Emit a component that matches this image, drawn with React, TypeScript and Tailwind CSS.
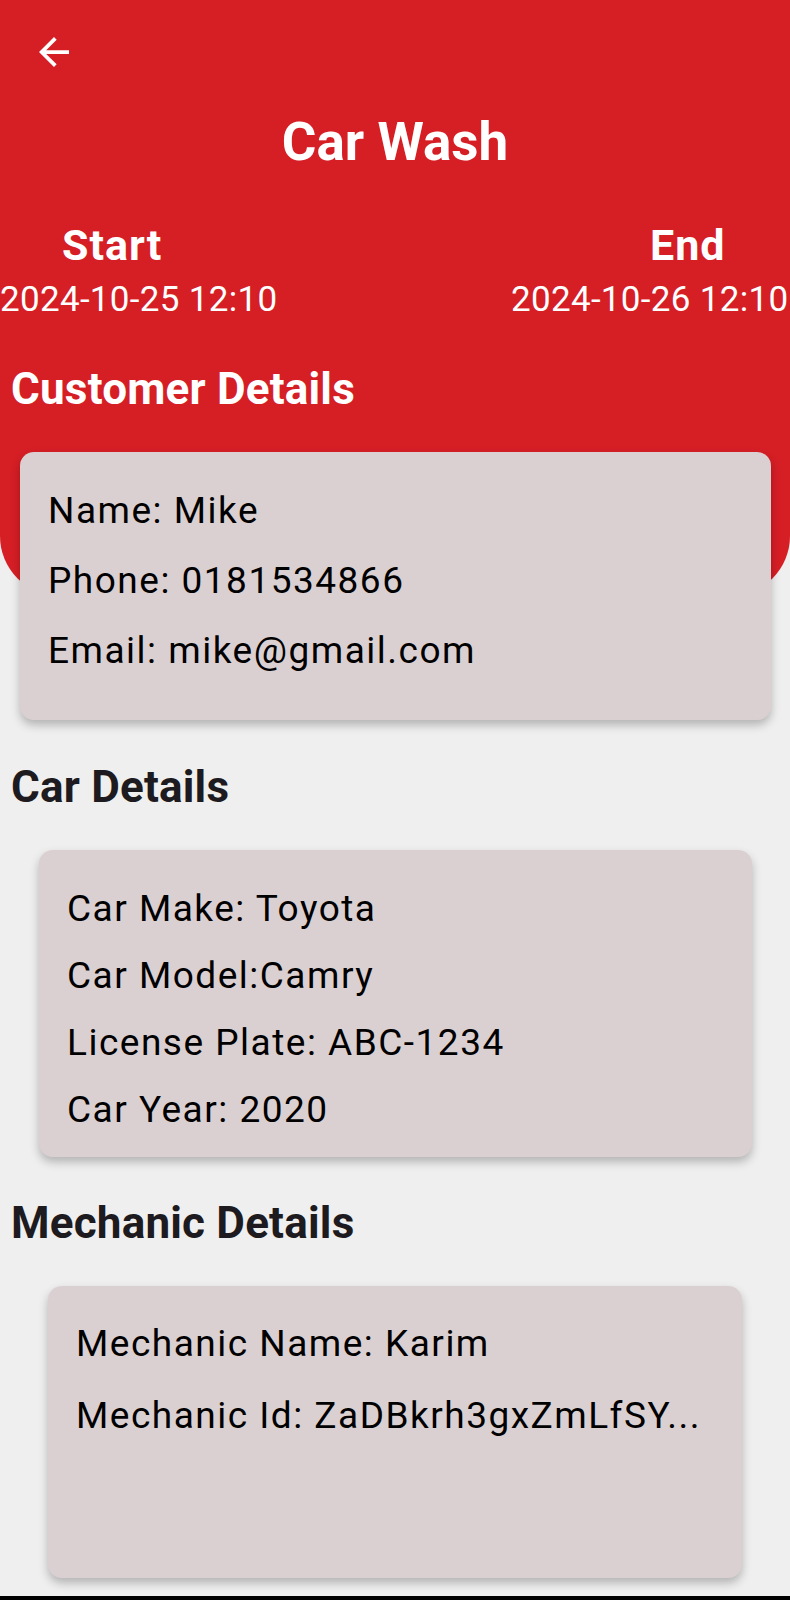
function ArrowBack() {
  return (
    <svg viewBox="4 4 16 16" className="w-[30px] h-[30px]" fill="currentColor">
      <path d="M20 11H7.83l5.59-5.59L12 4l-8 8 8 8 1.41-1.41L7.83 13H20v-2z" />
    </svg>
  );
}

export default function App() {
  return (
    <div className="min-h-[1600px] w-full overflow-hidden bg-[#f0efef] font-[Roboto,sans-serif] flex flex-col">
      {/* Red header */}
      <div className="h-[596px] shrink-0 bg-[#d61e25] rounded-b-[60px] text-white">
        <div className="pt-[37px] pl-[39px]">
          <ArrowBack />
        </div>
        <h1 className="mt-[49px] text-center text-[53px] font-bold leading-none">Car Wash</h1>
        <div className="mt-[55px] flex">
          <div className="w-[511px] shrink-0">
            <div className="pl-[62px] text-[43px] font-bold leading-none tracking-[1px]">Start</div>
            <div className="mt-[15px] text-[35px] leading-none tracking-[0.3px] whitespace-nowrap">2024-10-25 12:10</div>
          </div>
          <div className="flex-1 min-w-0">
            <div className="pl-[139px] text-[43px] font-bold leading-none tracking-[1px]">End</div>
            <div className="mt-[15px] text-[35px] leading-none tracking-[0.3px] whitespace-nowrap">2024-10-26 12:10</div>
          </div>
        </div>
        <h2 className="mt-[50px] pl-[11px] text-[44px] font-bold leading-none tracking-[0.2px]">Customer Details</h2>
      </div>

      {/* Customer card */}
      <div className="relative -mt-[144px] ml-[20px] mr-[19px] rounded-[14px] bg-[#dbd0d1] shadow-[0_5px_10px_rgba(0,0,0,0.25)] pl-[28px] pt-[24px] pb-[34px] text-[37px] leading-[70px] tracking-[1.5px] text-black">
        <p>Name: Mike</p>
        <p>Phone: 0181534866</p>
        <p>Email: mike@gmail.com</p>
      </div>

      <h2 className="mt-[45px] pl-[11px] text-[44px] font-bold leading-none tracking-[0.2px] text-[#1d1b20]">Car Details</h2>
      <div className="mt-[41px] ml-[39px] mr-[38px] rounded-[14px] bg-[#dbd0d1] shadow-[0_5px_10px_rgba(0,0,0,0.25)] pl-[28px] pt-[25px] pb-[14px] text-[37px] leading-[67px] tracking-[1.5px] text-black">
        <p>Car Make: Toyota</p>
        <p>Car Model:Camry</p>
        <p>License Plate: ABC-1234</p>
        <p>Car Year: 2020</p>
      </div>

      <h2 className="mt-[44px] pl-[11px] text-[44px] font-bold leading-none tracking-[0.2px] text-[#1d1b20]">Mechanic Details</h2>
      <div className="mt-[41px] mx-[48px] rounded-[14px] bg-[#dbd0d1] shadow-[0_5px_10px_rgba(0,0,0,0.25)] pl-[28px] pt-[22px] pb-[126px] text-[37px] leading-[72px] tracking-[1.5px] text-black">
        <p>Mechanic Name: Karim</p>
        <p className="whitespace-nowrap">Mechanic Id: ZaDBkrh3gxZmLfSY...</p>
      </div>

      <div className="mt-auto h-[4px] bg-black" />
    </div>
  );
}
